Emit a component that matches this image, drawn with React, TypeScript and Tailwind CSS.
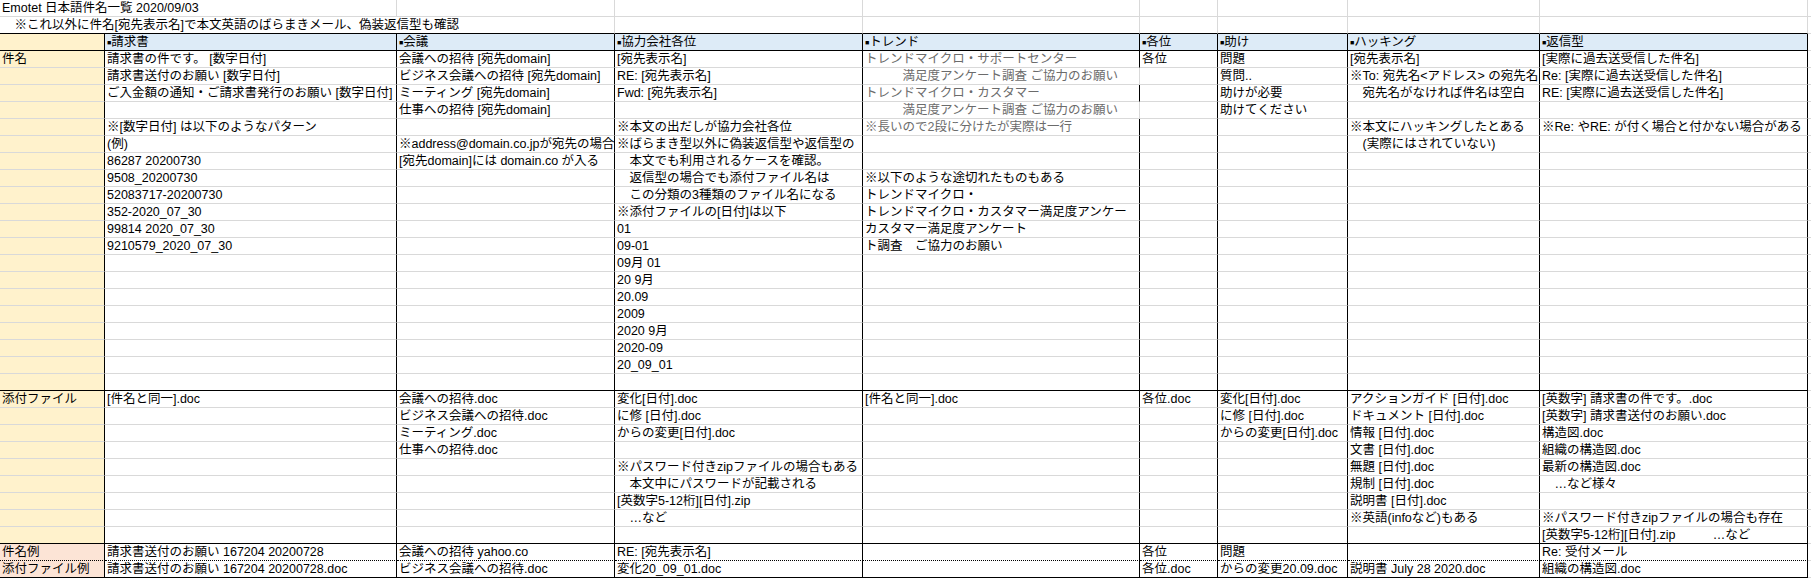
const COLS =
  'grid grid-cols-[105px_292px_218px_248px_277px_78px_130px_192px_268px_3px] auto-rows-[17px]';

const GRID_R = 'border-r border-r-[#d9d9d9]';
const BLACK_R = 'border-r border-r-black';
const GRID_B = 'border-b border-b-[#d9d9d9]';
const BLACK_B = 'border-b border-b-black';
const DOT_B = 'border-b border-b-black [border-bottom-style:dotted]';

const HEADERS = ['請求書', '会議', '協力会社各位', 'トレンド', '各位', '助け', 'ハッキング', '返信型'];

// one list of lines per column
const SUBJECT: string[][] = [
  [
    '請求書の件です。 [数字日付]',
    '請求書送付のお願い [数字日付]',
    'ご入金額の通知・ご請求書発行のお願い [数字日付]',
    '',
    '※[数字日付] は以下のようなパターン',
    '(例)',
    '86287 20200730',
    '9508_20200730',
    '52083717-20200730',
    '352-2020_07_30',
    '99814 2020_07_30',
    '9210579_2020_07_30',
  ],
  [
    '会議への招待 [宛先domain]',
    'ビジネス会議への招待 [宛先domain]',
    'ミーティング [宛先domain]',
    '仕事への招待 [宛先domain]',
    '',
    '※address@domain.co.jpが宛先の場合',
    '[宛先domain]には domain.co が入る',
  ],
  [
    '[宛先表示名]',
    'RE: [宛先表示名]',
    'Fwd: [宛先表示名]',
    '',
    '※本文の出だしが協力会社各位',
    '※ばらまき型以外に偽装返信型や返信型の',
    '　本文でも利用されるケースを確認。',
    '　返信型の場合でも添付ファイル名は',
    '　この分類の3種類のファイル名になる',
    '※添付ファイルの[日付]は以下',
    '01',
    '09-01',
    '09月 01',
    '20 9月',
    '20.09',
    '2009',
    '2020 9月',
    '2020-09',
    '20_09_01',
  ],
  [
    'トレンドマイクロ・サポートセンター',
    '　　　満足度アンケート調査 ご協力のお願い',
    'トレンドマイクロ・カスタマー',
    '　　　満足度アンケート調査 ご協力のお願い',
    '※長いので2段に分けたが実際は一行',
    '',
    '',
    '※以下のような途切れたものもある',
    'トレンドマイクロ・',
    'トレンドマイクロ・カスタマー満足度アンケー',
    'カスタマー満足度アンケート',
    'ト調査　ご協力のお願い',
  ],
  ['各位'],
  ['問題', '質問..', '助けが必要', '助けてください'],
  [
    '[宛先表示名]',
    '※To: 宛先名<アドレス> の宛先名',
    '　宛先名がなければ件名は空白',
    '',
    '※本文にハッキングしたとある',
    '　(実際にはされていない)',
  ],
  [
    '[実際に過去送受信した件名]',
    'Re: [実際に過去送受信した件名]',
    'RE: [実際に過去送受信した件名]',
    '',
    '※Re: やRE: が付く場合と付かない場合がある',
  ],
];

const ATTACH: string[][] = [
  ['[件名と同一].doc'],
  ['会議への招待.doc', 'ビジネス会議への招待.doc', 'ミーティング.doc', '仕事への招待.doc'],
  [
    '変化[日付].doc',
    'に修 [日付].doc',
    'からの変更[日付].doc',
    '',
    '※パスワード付きzipファイルの場合もある',
    '　本文中にパスワードが記載される',
    '[英数字5-12桁][日付].zip',
    '　…など',
  ],
  ['[件名と同一].doc'],
  ['各位.doc'],
  ['変化[日付].doc', 'に修 [日付].doc', 'からの変更[日付].doc'],
  [
    'アクションガイド [日付].doc',
    'ドキュメント [日付].doc',
    '情報 [日付].doc',
    '文書 [日付].doc',
    '無題 [日付].doc',
    '規制 [日付].doc',
    '説明書 [日付].doc',
    '※英語(infoなど)もある',
  ],
  [
    '[英数字] 請求書の件です。.doc',
    '[英数字] 請求書送付のお願い.doc',
    '構造図.doc',
    '組織の構造図.doc',
    '最新の構造図.doc',
    '　…など様々',
    '',
    '※パスワード付きzipファイルの場合も存在',
    '[英数字5-12桁][日付].zip　　　…など',
  ],
];

const SUBJECT_EX = [
  '請求書送付のお願い 167204 20200728',
  '会議への招待 yahoo.co',
  'RE: [宛先表示名]',
  '',
  '各位',
  '問題',
  '',
  'Re: 受付メール',
];

const ATTACH_EX = [
  '請求書送付のお願い 167204 20200728.doc',
  'ビジネス会議への招待.doc',
  '変化20_09_01.doc',
  '',
  '各位.doc',
  'からの変更20.09.doc',
  '説明書 July 28 2020.doc',
  '組織の構造図.doc',
];

type Row = {
  label: string;
  pink: boolean;
  cells: string[];
  bottom: 'grid' | 'black' | 'dotted';
  gray: boolean;
  softTrendEdge: boolean;
};

const toRows = (cols: string[][], count: number, label: string, grayUntil: number, soft: number[]): Row[] =>
  Array.from({ length: count }, (_, i) => ({
    label: i === 0 ? label : '',
    pink: false,
    cells: cols.map((c) => c[i] ?? ''),
    bottom: i === count - 1 ? 'black' : 'grid',
    gray: i < grayUntil,
    softTrendEdge: soft.includes(i),
  }));

const ROWS: Row[] = [
  ...toRows(SUBJECT, 20, '件名', 5, [1, 3]),
  ...toRows(ATTACH, 9, '添付ファイル', 0, []),
  { label: '件名例', pink: true, cells: SUBJECT_EX, bottom: 'dotted', gray: false, softTrendEdge: false },
  { label: '添付ファイル例', pink: true, cells: ATTACH_EX, bottom: 'black', gray: false, softTrendEdge: false },
];

const BOTTOM = { grid: GRID_B, black: BLACK_B, dotted: DOT_B };

const Cell = ({ text, className = '' }: { text?: string; className?: string }) => (
  <div className={`min-w-0 whitespace-pre pl-[2px] leading-[16px] ${className}`}>{text}</div>
);

export default function App() {
  return (
    <div className="w-[1811px] h-[582px] bg-white text-black text-[12.5px] font-['Liberation_Sans','Noto_Sans_CJK_JP',sans-serif] overflow-hidden">
      <div className={COLS}>
        {/* title rows */}
        <Cell text="Emotet 日本語件名一覧 2020/09/03" className={`relative z-10 ${GRID_B}`} />
        {Array.from({ length: 8 }, (_, i) => (
          <Cell key={`t1-${i}`} className={`${GRID_R} ${GRID_B}`} />
        ))}
        <Cell className={GRID_B} />

        <Cell
          text="　※これ以外に件名[宛先表示名]で本文英語のばらまきメール、偽装返信型も確認"
          className={`relative z-10 ${BLACK_B}`}
        />
        <Cell className={BLACK_B} />
        {Array.from({ length: 7 }, (_, i) => (
          <Cell key={`t2-${i}`} className={`${GRID_R} ${BLACK_B}`} />
        ))}
        <Cell className={GRID_B} />

        {/* header */}
        <Cell className={`bg-[#fff2cc] ${BLACK_R} ${BLACK_B}`} />
        {HEADERS.map((h) => (
          <div key={h} className={`whitespace-pre pl-[2px] leading-[16px] bg-[#ddebf7] ${BLACK_R} ${BLACK_B}`}>
            <span className="text-[7px] align-[1px]">■</span>
            {h}
          </div>
        ))}
        <Cell className={GRID_B} />

        {/* body */}
        {ROWS.map((row, r) => (
          <div key={r} className="contents">
            <Cell
              text={row.label}
              className={`${row.pink ? 'bg-[#fce4d6]' : 'bg-[#fff2cc]'} ${BLACK_R} ${BOTTOM[row.bottom]}`}
            />
            {row.cells.map((text, c) => (
              <Cell
                key={c}
                text={text}
                className={`${c === 3 && row.softTrendEdge ? GRID_R : BLACK_R} ${BOTTOM[row.bottom]} ${
                  c === 3 && row.gray ? 'text-[#6b6b6b]' : ''
                }`}
              />
            ))}
            <Cell className={GRID_B} />
          </div>
        ))}
      </div>
    </div>
  );
}
